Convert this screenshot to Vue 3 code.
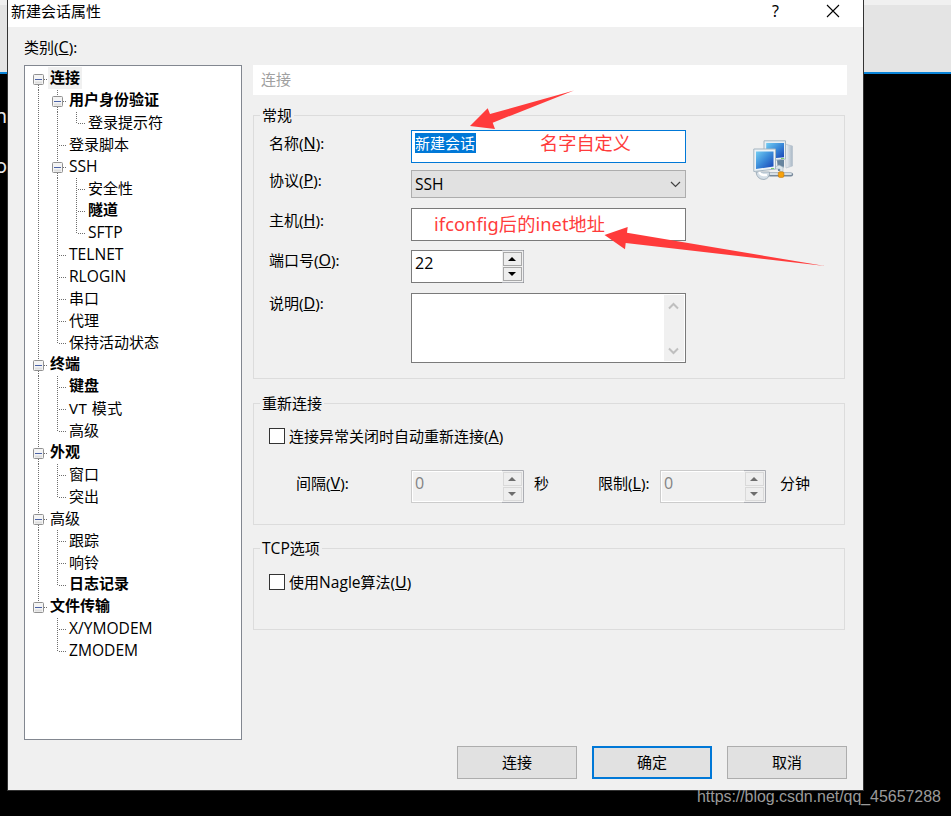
<script setup>
// Guide letters: E first/mid/last expander (A, E, Z), | through line, T branch, L last branch, space blank
const rows = [
  { g: 'A', t: '连接', b: true, sel: true },
  { g: '|E', t: '用户身份验证', b: true },
  { g: '||L', t: '登录提示符' },
  { g: '|T', t: '登录脚本' },
  { g: '|E', t: 'SSH', en: true },
  { g: '||T', t: '安全性' },
  { g: '||T', t: '隧道', b: true },
  { g: '||L', t: 'SFTP', en: true },
  { g: '|T', t: 'TELNET', en: true },
  { g: '|T', t: 'RLOGIN', en: true },
  { g: '|T', t: '串口' },
  { g: '|T', t: '代理' },
  { g: '|L', t: '保持活动状态' },
  { g: 'E', t: '终端', b: true },
  { g: '|T', t: '键盘', b: true },
  { g: '|T', t: 'VT 模式', mix: true },
  { g: '|L', t: '高级' },
  { g: 'E', t: '外观', b: true },
  { g: '|T', t: '窗口' },
  { g: '|L', t: '突出' },
  { g: 'E', t: '高级' },
  { g: '|T', t: '跟踪' },
  { g: '|T', t: '响铃' },
  { g: '|L', t: '日志记录', b: true },
  { g: 'Z', t: '文件传输', b: true },
  { g: ' T', t: 'X/YMODEM', en: true },
  { g: ' L', t: 'ZMODEM', en: true },
]
const paths = {
  A: 'M9.5 17V22M15 11.5H19',
  E: 'M9.5 0V6M9.5 17V22M15 11.5H19',
  Z: 'M9.5 0V6M15 11.5H19',
  '|': 'M9.5 0V22',
  T: 'M9.5 0V22M11 11.5H19',
  L: 'M9.5 0V12M11 11.5H19',
  ' ': '',
}
const isBox = (c) => 'AEZ'.includes(c)
</script>

<template>
  <div class="desktop">
    <div class="strip"></div>
    <div class="ribbon"></div>
    <div class="console">
      <span class="frag">n</span>
      <span class="frag second">o</span>
    </div>

    <div class="dialog">
      <header class="titlebar">
        <span class="title">新建会话属性</span>
        <span class="help">?</span>
        <svg class="close" width="14" height="14" viewBox="0 0 14 14"><path d="M1 1L13 13M13 1L1 13" stroke="#000" stroke-width="1.1" fill="none" /></svg>
      </header>

      <div class="body">
        <aside class="side">
          <div class="caption">类别(<u>C</u>):</div>
          <div class="tree">
            <div v-for="(r, i) in rows" :key="i" class="node">
              <svg v-for="(c, k) in r.g.split('')" :key="k" class="guide" width="19" height="22" viewBox="0 0 19 22">
                <path :d="paths[c]" stroke="#6e6e6e" stroke-dasharray="1 1" fill="none" />
                <template v-if="isBox(c)">
                  <rect x="4.5" y="6.5" width="10" height="10" rx="1" fill="#f4f4f4" stroke="#919191" />
                  <path d="M6 14.5H13" stroke="#dedede" stroke-width="2" />
                  <path d="M6 11.5H13" stroke="#4b63a7" />
                </template>
              </svg>
              <span class="name" :class="{ bold: r.b, sel: r.sel, latin: r.en, mix: r.mix }">{{ r.t }}</span>
            </div>
          </div>
        </aside>

        <main class="pane">
          <div class="heading">连接</div>

          <section class="group general">
            <div class="legend">常规</div>
            <div class="general-body">
              <div class="fields">
                <div class="field name-row">
                  <label>名称(<u>N</u>):</label>
                  <div class="box focus"><span class="picked">新建会话</span></div>
                </div>
                <div class="field proto-row">
                  <label>协议(<u>P</u>):</label>
                  <div class="box select">
                    <span class="latin">SSH</span>
                    <svg width="11" height="7" viewBox="0 0 11 7"><path d="M1 1L5.5 5.5L10 1" stroke="#404040" stroke-width="1.2" fill="none" /></svg>
                  </div>
                </div>
                <div class="field host-row">
                  <label>主机(<u>H</u>):</label>
                  <div class="box"></div>
                </div>
                <div class="field port-row">
                  <label>端口号(<u>O</u>):</label>
                  <div class="spin">
                    <span class="value">22</span>
                    <span class="arrows">
                      <i><svg width="8" height="4" viewBox="0 0 8 4"><path d="M0 4L4 0L8 4Z" /></svg></i>
                      <i><svg width="8" height="4" viewBox="0 0 8 4"><path d="M0 0H8L4 4Z" /></svg></i>
                    </span>
                  </div>
                </div>
                <div class="field note-row">
                  <label>说明(<u>D</u>):</label>
                  <div class="box area">
                    <div class="scroll">
                      <svg width="11" height="8" viewBox="0 0 11 8"><path d="M1 6.5L5.5 2L10 6.5" /></svg>
                      <svg width="11" height="8" viewBox="0 0 11 8"><path d="M1 1.5L5.5 6L10 1.5" /></svg>
                    </div>
                  </div>
                </div>
              </div>
              <svg class="pcs" width="41" height="41" viewBox="0 0 41 41">
                <defs>
                  <linearGradient id="scr" x1="0" y1="0" x2="1" y2="1">
                    <stop offset="0" stop-color="#72cdf3" />
                    <stop offset=".5" stop-color="#3988d8" />
                    <stop offset="1" stop-color="#1740b4" />
                  </linearGradient>
                  <linearGradient id="tower" x1="0" x2="1">
                    <stop offset="0" stop-color="#f5f7f9" />
                    <stop offset="1" stop-color="#a9b8c6" />
                  </linearGradient>
                </defs>
                <path d="M32 4L39.5 6V26L33 28Z" fill="url(#tower)" stroke="#b6c2cd" stroke-width=".7" />
                <path d="M24 20H31V26L29 31H25Z" fill="#66849e" />
                <path d="M11 .8H32.5V19L11 21.5Z" fill="#e8eff4" stroke="#a5b5c1" />
                <path d="M13.2 3H31V17.3L13.2 19Z" fill="url(#scr)" />
                <path d="M17 34.5H38" stroke="#77889a" stroke-width="4.2" stroke-linecap="round" />
                <path d="M17 34H38" stroke="#d6dfe6" stroke-width="1.8" stroke-linecap="round" />
                <path d="M3 32Q4 39.5 11 39.5Q17 38.5 16.5 32Z" fill="#d4dee6" stroke="#93a3b1" stroke-width=".8" />
                <path d="M6 32Q8 36 14 35" stroke="#fff" stroke-width="2.2" fill="none" />
                <path d="M18 29L26 25L30 27V32H27V29Z" fill="#dbe5ea" stroke="#96a8b6" stroke-width=".5" />
                <path d="M.8 9H22.5V29L.8 31.5Z" fill="#edf3f7" stroke="#a5b5c1" />
                <path d="M3 11.5H20.5V26.5L3 29Z" fill="url(#scr)" />
                <path d="M18 28.5H21M28 18.5H31" stroke="#78d071" stroke-width="1.2" />
                <rect x="25.3" y="31.8" width="5.6" height="5.6" rx="1.5" fill="#f8a20b" stroke="#bc7612" stroke-width=".6" />
              </svg>
            </div>
          </section>

          <section class="group reconnect">
            <div class="legend">重新连接</div>
            <div class="check"><span class="tick"></span>连接异常关闭时自动重新连接(<u>A</u>)</div>
            <div class="timing">
              <label class="gap-label">间隔(<u>V</u>):</label>
              <div class="spin off">
                <span class="value">0</span>
                <span class="arrows">
                  <i><svg width="8" height="4" viewBox="0 0 8 4"><path d="M0 4L4 0L8 4Z" /></svg></i>
                  <i><svg width="8" height="4" viewBox="0 0 8 4"><path d="M0 0H8L4 4Z" /></svg></i>
                </span>
              </div>
              <span class="unit sec">秒</span>
              <label class="limit-label">限制(<u>L</u>):</label>
              <div class="spin off narrow">
                <span class="value">0</span>
                <span class="arrows">
                  <i><svg width="8" height="4" viewBox="0 0 8 4"><path d="M0 4L4 0L8 4Z" /></svg></i>
                  <i><svg width="8" height="4" viewBox="0 0 8 4"><path d="M0 0H8L4 4Z" /></svg></i>
                </span>
              </div>
              <span class="unit min">分钟</span>
            </div>
          </section>

          <section class="group tcp">
            <div class="legend"><span class="latin">TCP</span>选项</div>
            <div class="check"><span class="tick"></span>使用<span class="latin">Nagle</span>算法(<u>U</u>)</div>
          </section>

          <footer class="actions">
            <button>连接</button>
            <button class="primary">确定</button>
            <button>取消</button>
          </footer>
        </main>
      </div>
    </div>

    <svg class="arrows-layer" width="951" height="816" viewBox="0 0 951 816">
      <path d="M470 126L487.7 108.3L490 114L574 90.5L492.7 122.7L495 129Z" fill="#ff3b3b" />
      <path d="M604.5 235L627.7 227L627 232.7L825 266L625.7 243L625 249.3Z" fill="#ff3b3b" />
    </svg>
    <span class="remark custom">名字自定义</span>
    <span class="remark inet">ifconfig后的inet地址</span>
    <span class="watermark">https://blog.csdn.net/qq_45657288</span>
  </div>
</template>

<style>
body {
  margin: 0;
  background: #000;
  overflow: hidden;
}
</style>

<style scoped>
* {
  box-sizing: border-box;
}
.desktop {
  position: relative;
  width: 951px;
  height: 816px;
  overflow: hidden;
  background: #000;
  color: #000;
  font: 15px/20px "Noto Sans", "Noto Sans CJK SC", sans-serif;
  white-space: nowrap;
}
.latin {
  font-family: "Open Sans", "Noto Sans", sans-serif;
  font-size: 15.6px;
}
u {
  font-size: 16px;
  line-height: 1;
}
.strip {
  height: 5px;
  background: #f0f0f0;
}
.ribbon {
  height: 69px;
  background: #e4e4e4;
  border-bottom: 2px solid #0a84d8;
}
.console {
  width: 7px;
  display: flex;
  flex-direction: column;
  align-items: flex-end;
  padding-top: 30px;
  overflow: hidden;
  color: #e8e8e8;
  font-size: 20px;
}
.frag {
  height: 50px;
  line-height: 24px;
}
.dialog {
  position: absolute;
  left: 7px;
  top: 0;
  width: 857px;
  height: 791px;
  border: 1px solid #333;
  border-top: 0;
  background: #f0f0f0;
}
.titlebar {
  height: 27px;
  background: #fff;
  display: flex;
  align-items: flex-start;
  padding-left: 3px;
}
.title {
  width: 761px;
  line-height: 22px;
}
.help {
  width: 54px;
  line-height: 22px;
  font-size: 16px;
}
.close {
  margin-top: 4px;
}
.body {
  display: flex;
  gap: 11px;
  padding: 11px 16px 0;
}
.side {
  width: 218px;
}
.caption {
  height: 27px;
  line-height: 18px;
}
.tree {
  height: 675px;
  border: 1px solid #828790;
  background: #fff;
  padding: 2px 0 0 4px;
}
.node {
  display: flex;
  height: 22px;
}
.guide {
  display: block;
  flex: none;
}
.name {
  height: 22px;
  line-height: 20px;
  padding: 0 2px;
}
.name.mix {
  letter-spacing: 0.5px;
}
.name.bold {
  font-weight: 700;
  line-height: 18px;
}
.name.sel {
  background: #f0f0f0;
  margin-top: -1px;
  line-height: 20px;
}
.pane {
  width: 594px;
  padding-top: 27px;
}
.heading {
  height: 30px;
  background: #fff;
  color: #a0a0a0;
  padding-left: 8px;
  line-height: 29px;
}
.group {
  width: 592px;
  border: 1px solid #dcdcdc;
  padding: 0 15px;
}
.legend {
  width: max-content;
  height: 20px;
  margin: -11px 0 0 -9px;
  padding: 0 2px;
  background: #f0f0f0;
}
.general {
  height: 264px;
  margin-top: 20px;
}
.general-body {
  display: flex;
  padding-top: 5px;
}
.fields {
  width: 417px;
}
.field {
  display: flex;
  align-items: flex-start;
}
.field label {
  width: 142px;
}
.name-row {
  height: 40px;
}
.name-row label {
  padding-top: 3px;
}
.proto-row {
  height: 38px;
}
.proto-row label {
  padding-top: 0;
}
.host-row {
  height: 42px;
}
.host-row label {
  padding-top: 2px;
}
.port-row {
  height: 43px;
}
.port-row label {
  padding-top: 0;
}
.box {
  width: 275px;
  height: 33px;
  border: 1px solid #7a7a7a;
  background: #fff;
  padding: 2px 3px;
}
.box.focus {
  border-color: #0078d7;
}
.picked {
  display: block;
  width: 61px;
  height: 20px;
  line-height: 20px;
  background: #0078d7;
  color: #fff;
}
.box.select {
  height: 28px;
  display: flex;
  align-items: center;
  justify-content: space-between;
  padding-right: 4px;
  background: #e1e1e1;
  border-color: #adadad;
}
.box.area {
  height: 70px;
  padding: 1px;
}
.scroll {
  width: 20px;
  height: 66px;
  margin-left: auto;
  padding: 7px 1px 6px 0;
  display: flex;
  flex-direction: column;
  align-items: center;
  justify-content: space-between;
  background: #f0f0f0;
}
.scroll path {
  stroke: #bfbfbf;
  stroke-width: 2;
  fill: none;
}
.pcs {
  margin: 10px 0 0 67px;
}
.spin {
  width: 113px;
  height: 33px;
  display: flex;
  justify-content: space-between;
  border: 1px solid #7a7a7a;
  border-right-color: #abadb3;
  background: #fff;
}
.value {
  padding: 2px 0 0 3px;
  font-family: "Open Sans", "Noto Sans", sans-serif;
  font-size: 16px;
}
.arrows {
  width: 21px;
  margin: -1px 0;
  padding: 1px;
  display: flex;
  flex-direction: column;
  gap: 1px;
  border: solid #abadb3;
  border-width: 1px 0;
  background: #f0f0f0;
}
.arrows i {
  height: 14px;
  display: flex;
  align-items: center;
  justify-content: center;
  padding-right: 1px;
  border: 1px solid #a8a8a8;
  background: #eee;
}
.spin.off {
  border-color: #ccc #abadb3 #ccc #ccc;
  background: #f0f0f0;
  box-shadow: inset 1px 1px #fff, inset 0 -1px #fff;
}
.off .value {
  color: #838383;
}
.off .arrows i {
  border-color: #d9d9d9;
}
.off .arrows path {
  fill: #6d6d6d;
}
.spin.narrow {
  width: 106px;
}
.reconnect {
  height: 122px;
  margin-top: 24px;
}
.check {
  display: flex;
  align-items: center;
  height: 20px;
}
.check u {
  line-height: 20px;
}
.reconnect .check {
  margin-top: 13px;
}
.tick {
  width: 16px;
  height: 16px;
  border: 1px solid #333;
  background: #fff;
  margin-right: 4px;
}
.timing {
  display: flex;
  padding: 24px 0 0 27px;
}
.gap-label {
  width: 115px;
  padding-top: 3px;
}
.unit {
  padding-top: 3px;
}
.sec {
  width: 64px;
  margin-left: 10px;
}
.limit-label {
  width: 62px;
  padding-top: 3px;
}
.min {
  margin-left: 14px;
}
.tcp {
  height: 82px;
  margin-top: 23px;
}
.tcp .check {
  margin-top: 14px;
}
.actions {
  display: flex;
  justify-content: flex-end;
  gap: 15px;
  margin-top: 116px;
}
.actions button {
  width: 120px;
  height: 33px;
  padding: 0 0 2px;
  border: 1px solid #adadad;
  background: #e1e1e1;
  color: #000;
  font: inherit;
}
.actions .primary {
  border: 2px solid #0078d7;
}
.arrows-layer {
  position: absolute;
  left: 0;
  top: 0;
}
.remark {
  position: absolute;
  color: #ff3b3b;
  font-size: 18.2px;
  line-height: 24px;
}
.custom {
  left: 540px;
  top: 131px;
}
.inet {
  left: 434px;
  top: 212px;
  letter-spacing: 0.1px;
}
.watermark {
  position: absolute;
  left: 697px;
  top: 787px;
  color: #9a9a9a;
  font: 16px/20px "Liberation Sans", sans-serif;
  letter-spacing: -0.05px;
}
</style>
